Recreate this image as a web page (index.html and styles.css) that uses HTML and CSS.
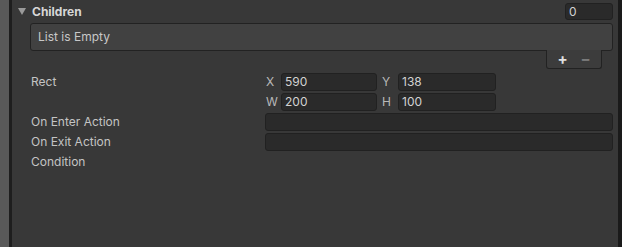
FILE: index.html
```html
<!DOCTYPE html>
<html>
	<head>
		<meta charset="UTF-8">
		<title>Inspector</title>
		<link rel="stylesheet" href="styles.css">
	</head>
	<body>
		<div class="window">
			<div class="side"></div>
			<div class="panel">
				<!-- foldout header -->
				<div class="foldout">
					<span class="arrow"></span>
					<span class="title">Children</span>
					<div class="field count">0</div>
				</div>
				<div class="list">List is Empty</div>
				<div class="list_footer"><span>+</span><span class="minus">−</span></div>

				<div class="prop">
					<div class="label">Rect</div>
					<div class="rect">
						<span class="axis">X</span><div class="field">590</div>
						<span class="axis axis_2">Y</span><div class="field">138</div>
						<span class="axis">W</span><div class="field">200</div>
						<span class="axis axis_2">H</span><div class="field">100</div>
					</div>
				</div>
				<div class="prop">
					<div class="label">On Enter Action</div>
					<div class="field wide"></div>
				</div>
				<div class="prop">
					<div class="label">On Exit Action</div>
					<div class="field wide"></div>
				</div>
				<div class="prop">
					<div class="label">Condition</div>
				</div>
			</div>
			<div class="edge"></div>
		</div>
	</body>
</html>
```

FILE: styles.css
```css
*{
	margin: 0;
	padding: 0;
	box-sizing: border-box;
}
body{
	background-color: #383838;
	font-family: Inter, "Noto Sans", sans-serif;
	font-size: 12px;
	color: #c4c4c4;
}
.window{
	display: flex;
	width: 622px;
	height: 247px;
}
.side{
	width: 9px;
	background-color: #595959;
	border-right: 3px solid #1e1e1e;
	flex: 0 0 12px;
}
.edge{
	flex: 0 0 4px;
	background-color: #1a1a1a;
}
.panel{
	flex: 1;
	background-color: #383838;
	padding: 2px 5px 0 6px;
	display: flex;
	flex-direction: column;
}
.foldout{
	display: flex;
	align-items: center;
	height: 18px;
}
.arrow{
	width: 0;
	height: 0;
	border-left: 4px solid transparent;
	border-right: 4px solid transparent;
	border-top: 7px solid #9a9a9a;
	margin-right: 6px;
}
.title{
	font-weight: bold;
	color: #d6d6d6;
	flex: 1;
}
.field{
	height: 18px;
	background-color: #2a2a2a;
	border: 1px solid #212121;
	border-radius: 3px;
	color: #d2d2d2;
	line-height: 16px;
	padding-left: 3px;
}
.count{
	width: 48px;
	height: 17px;
	margin-top: 1px;
}
.list{
	margin: 3px 0 0 12px;
	height: 28px;
	background-color: #414141;
	border: 1px solid #222;
	border-radius: 3px;
	line-height: 26px;
	padding-left: 7px;
	color: #c8c8c8;
}
.list_footer{
	align-self: flex-end;
	margin: -1px 11px 0 0;
	width: 56px;
	height: 19px;
	background-color: #3c3c3c;
	border: 1px solid #222;
	border-top: none;
	border-radius: 0 0 3px 3px;
	display: flex;
	justify-content: space-around;
	padding: 0 4px;
	line-height: 17px;
	font-size: 15px;
	font-weight: bold;
	color: #e0e0e0;
}
.list_footer .minus{
	color: #7a7a7a;
}
.prop{
	display: flex;
	align-items: flex-start;
	margin: 2px 0 0 12px;
	min-height: 18px;
}
.list_footer + .prop{
	margin-top: 4px;
}
.label{
	padding-left: 1px;
	line-height: 18px;
	flex: 0 0 235px;
}
.wide{
	flex: 1;
}
.rect{
	display: grid;
	grid-template-columns: 16px 96px 21px 98px;
	row-gap: 2px;
}
.axis{
	line-height: 18px;
	padding-left: 1px;
	color: #b8b8b8;
}
.axis_2{
	padding-left: 5px;
}
```
